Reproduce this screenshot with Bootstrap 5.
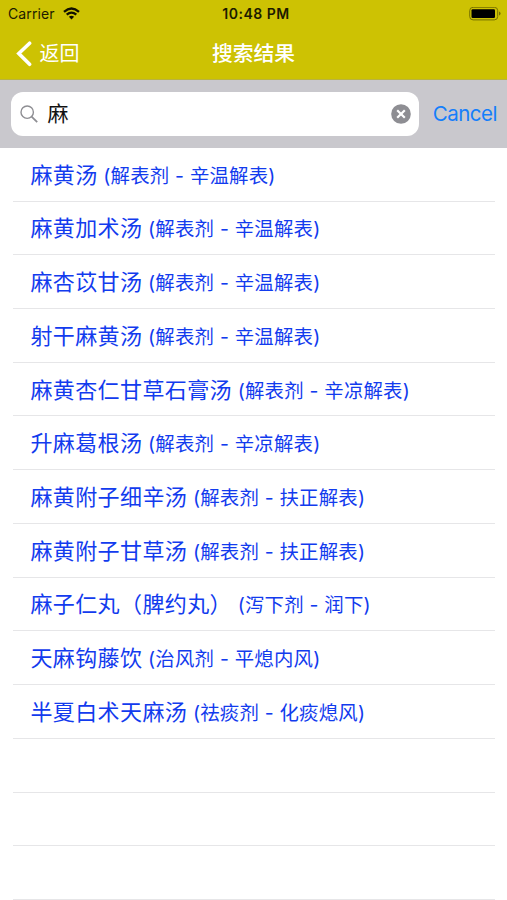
<!DOCTYPE html>
<html lang="zh-CN">
<head>
<meta charset="utf-8">
<meta name="viewport" content="width=device-width, initial-scale=1">
<title>搜索结果</title>
<link href="https://cdn.jsdelivr.net/npm/bootstrap@5.3.0/dist/css/bootstrap.min.css" rel="stylesheet">
<style>
body{font-family:Inter,"Noto Sans CJK SC",sans-serif;height:900px;overflow:hidden;background:#fff}
.top{background:#cdc203;height:80px;border-bottom:1px solid #b9b340}
.status{height:27px;padding:0 6px 0 8px;font-size:14px;color:#1c1b00}
.status .carrier{letter-spacing:.12px}
.status .clock{font-weight:600;font-size:14px;letter-spacing:.5px;padding-left:3px}
.side{flex:1 1 0}
.titlebar{height:52px;color:#fff;padding:1px 16px 0}
.back{font-size:20px;line-height:28px;margin-left:7.6px}
.heading{font-size:20.8px;font-weight:500;line-height:28px}
.search{background:#c9c8cd;height:67.6px;padding:0 10px 0 11px}
.field{height:44px;border-radius:12px;width:408px;padding:0 8px 0 9px}
.query{font-size:21px;line-height:30px;color:#111;padding-left:9.5px}
.cancel{font-size:20.5px;color:#147efb;line-height:28px;letter-spacing:-.5px}
.results{padding:0 12px 0 13px}
.result{height:53.73px;padding:2px 0 0 17.4px;border-bottom:1px solid #e6e6e8;color:#123bee;white-space:pre}
.result:first-child{height:54px}
.formula{font-size:22px;letter-spacing:.4px;line-height:32px}
.category{font-size:19.4px;letter-spacing:.22px;line-height:32px}
</style>
<script src="https://cdn.jsdelivr.net/npm/bootstrap@5.3.0/dist/js/bootstrap.bundle.min.js"></script>
</head>
<body>
<header class="top">
  <div class="status d-flex align-items-center">
    <div class="side d-flex align-items-center"><span class="carrier">Carrier</span>
      <svg class="ms-2" width="17" height="13" viewBox="0 0 17 13" fill="none" stroke="#111000" stroke-width="2.3"><path d="M1 4.8Q8.5-1.8 16 4.8M3.7 7.7Q8.5 3.5 13.3 7.7"/><path d="M8.5 12.4 5.9 9.8Q8.5 7.6 11.1 9.8Z" fill="#111000" stroke="none"/></svg>
    </div>
    <span class="clock">10:48 PM</span>
    <div class="side d-flex justify-content-end">
      <svg width="32" height="14" viewBox="0 0 32 14"><rect x=".7" y=".3" width="28" height="12.6" rx="3.4" fill="none" stroke="#777100"/><rect x="2.5" y="2.2" width="23.5" height="8.8" rx="1.2" fill="#000"/><path d="M30 4.5v4q1.6-.6 1.6-2t-1.6-2Z" fill="#777100"/></svg>
    </div>
  </div>
  <nav class="titlebar d-flex align-items-center">
    <div class="side d-flex align-items-center">
      <svg width="16" height="26" viewBox="0 0 16 26" fill="none" stroke="#fff" stroke-width="3.6" stroke-linecap="round"><path d="M13.6 2.2 2.8 12.5l10.8 10.8"/></svg>
      <span class="back">返回</span>
    </div>
    <span class="heading">搜索结果</span>
    <div class="side"></div>
  </nav>
</header>
<div class="search d-flex align-items-center justify-content-between">
  <div class="field bg-white d-flex align-items-center">
    <svg width="18" height="18" viewBox="0 0 18 18" fill="none" stroke="#8e8e93" stroke-width="1.4"><circle cx="7.2" cy="7.2" r="6.2"/><path d="m11.6 11.6 5.6 5.6" stroke-width="1.8"/></svg>
    <span class="query flex-grow-1">麻</span>
    <svg width="20" height="20" viewBox="0 0 20 20"><circle cx="10" cy="10" r="9.8" fill="#8e8e93"/><path d="m6.2 6.2 7.6 7.6m0-7.6-7.6 7.6" stroke="#fff" stroke-width="2.2"/></svg>
  </div>
  <span class="cancel">Cancel</span>
</div>
<main class="results">
  <div class="result d-flex align-items-center"><div><span class="formula">麻黄汤</span><span class="category"> (解表剂 - 辛温解表)</span></div></div>
  <div class="result d-flex align-items-center"><div><span class="formula">麻黄加术汤</span><span class="category"> (解表剂 - 辛温解表)</span></div></div>
  <div class="result d-flex align-items-center"><div><span class="formula">麻杏苡甘汤</span><span class="category"> (解表剂 - 辛温解表)</span></div></div>
  <div class="result d-flex align-items-center"><div><span class="formula">射干麻黄汤</span><span class="category"> (解表剂 - 辛温解表)</span></div></div>
  <div class="result d-flex align-items-center"><div><span class="formula">麻黄杏仁甘草石膏汤</span><span class="category"> (解表剂 - 辛凉解表)</span></div></div>
  <div class="result d-flex align-items-center"><div><span class="formula">升麻葛根汤</span><span class="category"> (解表剂 - 辛凉解表)</span></div></div>
  <div class="result d-flex align-items-center"><div><span class="formula">麻黄附子细辛汤</span><span class="category"> (解表剂 - 扶正解表)</span></div></div>
  <div class="result d-flex align-items-center"><div><span class="formula">麻黄附子甘草汤</span><span class="category"> (解表剂 - 扶正解表)</span></div></div>
  <div class="result d-flex align-items-center"><div><span class="formula">麻子仁丸（脾约丸）</span><span class="category"> (泻下剂 - 润下)</span></div></div>
  <div class="result d-flex align-items-center"><div><span class="formula">天麻钩藤饮</span><span class="category"> (治风剂 - 平熄内风)</span></div></div>
  <div class="result d-flex align-items-center"><div><span class="formula">半夏白术天麻汤</span><span class="category"> (祛痰剂 - 化痰熄风)</span></div></div>
  <div class="result"></div>
  <div class="result"></div>
  <div class="result"></div>
</main>
</body>
</html>
